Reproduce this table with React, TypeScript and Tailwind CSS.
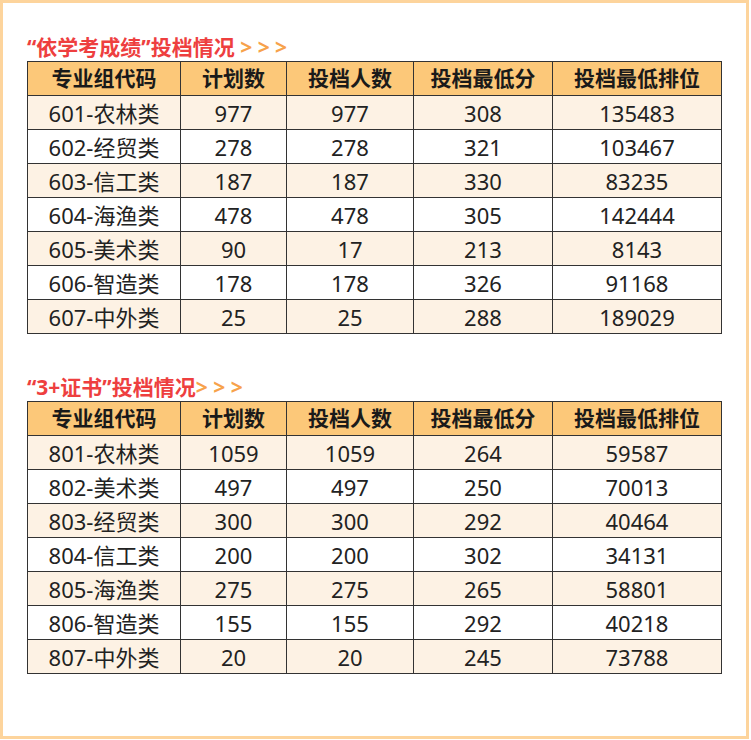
import React from 'react';

type Row = [string, string, string, string, string];

const headers = ['专业组代码', '计划数', '投档人数', '投档最低分', '投档最低排位'];
const colWidths = ['w-[153px]', 'w-[106px]', 'w-[127px]', 'w-[139px]', 'w-[169px]'];

const xueKao: Row[] = [
  ['601-农林类', '977', '977', '308', '135483'],
  ['602-经贸类', '278', '278', '321', '103467'],
  ['603-信工类', '187', '187', '330', '83235'],
  ['604-海渔类', '478', '478', '305', '142444'],
  ['605-美术类', '90', '17', '213', '8143'],
  ['606-智造类', '178', '178', '326', '91168'],
  ['607-中外类', '25', '25', '288', '189029'],
];

const zhengShu: Row[] = [
  ['801-农林类', '1059', '1059', '264', '59587'],
  ['802-美术类', '497', '497', '250', '70013'],
  ['803-经贸类', '300', '300', '292', '40464'],
  ['804-信工类', '200', '200', '302', '34131'],
  ['805-海渔类', '275', '275', '265', '58801'],
  ['806-智造类', '155', '155', '292', '40218'],
  ['807-中外类', '20', '20', '245', '73788'],
];

function ScoreTable({ rows }: { rows: Row[] }) {
  return (
    <table className="w-[694px] table-fixed border-collapse border-[1.5px] border-[#333]">
      <thead>
        <tr className="h-[34px] bg-[#fcc879]">
          {headers.map((h, i) => (
            <th
              key={h}
              className={`${colWidths[i]} border-[1.5px] border-[#333] p-0 text-center text-[21px] font-bold leading-none text-[#1a1a1a]`}
            >
              {h}
            </th>
          ))}
        </tr>
      </thead>
      <tbody>
        {rows.map((r, idx) => (
          <tr key={r[0]} className={`h-[34px] ${idx % 2 === 0 ? 'bg-[#fdf2e4]' : 'bg-white'}`}>
            {r.map((c, i) => (
              <td
                key={i}
                className="border-[1.5px] border-[#333] p-0 text-center text-[22px] leading-none text-[#222]"
              >
                {c}
              </td>
            ))}
          </tr>
        ))}
      </tbody>
    </table>
  );
}

export default function App() {
  return (
    <div className="bg-white">
      <div
        className="w-[749px] h-[739px] border-[3px] border-[#fdd49c] pl-[24px] pt-[30px]"
        style={{ fontFamily: '"Noto Sans", "Noto Sans CJK SC", sans-serif' }}
      >
        {/* 依学考成绩 */}
        <div className="h-[28px] text-[21px] font-bold leading-[28px] text-[#ee3f3f]">
          “依学考成绩”投档情况
          <span className="text-[#f7a24b]"> &gt; &gt; &gt;</span>
        </div>
        <ScoreTable rows={xueKao} />

        {/* 3+证书 */}
        <div className="mt-[39px] h-[28px] text-[21px] font-bold leading-[28px] text-[#ee3f3f]">
          “3+证书”投档情况
          <span className="text-[#f7a24b]">&gt; &gt; &gt;</span>
        </div>
        <ScoreTable rows={zhengShu} />
      </div>
    </div>
  );
}
